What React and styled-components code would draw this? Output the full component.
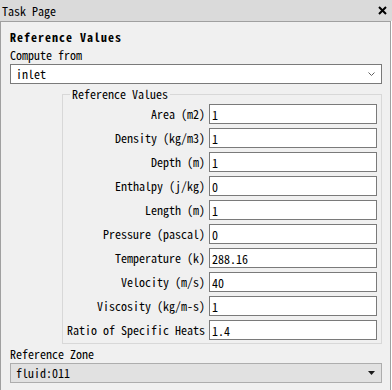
import React from "react";
import styled, { createGlobalStyle } from "styled-components";

const FONT = `"Noto Sans Mono CJK SC", "Liberation Mono", monospace`;

const GlobalStyle = createGlobalStyle`
  html, body {
    margin: 0;
    padding: 0;
    background: #ffffff;
  }
  body {
    font-family: ${FONT};
    font-size: 12px;
    color: #000;
  }
  * { box-sizing: border-box; }
`;

const Window = styled.div`
  width: 392px;
  display: flex;
  flex-direction: column;
`;

const TitleBar = styled.div`
  height: 21px;
  display: flex;
  align-items: center;
  justify-content: space-between;
  padding: 0 5px 0 2px;
  background: #dadada;
`;

const TitleText = styled.span`
  line-height: 14px;
`;

const CloseIcon = styled.svg`
  width: 9px;
  height: 9px;
  display: block;
`;

const Panel = styled.div`
  margin-right: 1px;
  border: 1px solid #a0a0a0;
  border-bottom: none;
  background: #f0f0f0;
  padding: 8px 8px 12px 9px;
  display: flex;
  flex-direction: column;
`;

const Heading = styled.div`
  font-weight: bold;
  letter-spacing: 1px;
  line-height: 14px;
`;

const FieldLabel = styled.div`
  line-height: 14px;
  margin-top: ${(p) => p.$top}px;
  margin-bottom: 2px;
`;

const Combo = styled.div`
  height: 20px;
  border: 1px solid ${(p) => (p.$flat ? "#adadad" : "#7a7a7a")};
  background: ${(p) => (p.$flat ? "#e1e1e1" : "#ffffff")};
  display: flex;
  align-items: center;
  justify-content: space-between;
  padding: 0 6px 0 5px;
  line-height: 14px;
`;

const Arrow = styled.svg`
  width: 7px;
  height: 4px;
  display: block;
`;

const GroupBox = styled.fieldset`
  margin: 3px 0 0 52px;
  padding: 3px 4px 3px 0;
  border: 1px solid #d8d8d8;
  min-inline-size: 0;
`;

const Legend = styled.legend`
  margin-left: 7px;
  padding: 0 2px;
  line-height: 14px;
`;

const Grid = styled.div`
  display: grid;
  grid-template-columns: 1fr 168px;
  column-gap: 4px;
  row-gap: 4px;
  align-items: center;
`;

const RowLabel = styled.label`
  text-align: right;
  line-height: 14px;
  white-space: nowrap;
`;

const ValueInput = styled.input`
  height: 20px;
  width: 168px;
  margin: 0;
  border: 1px solid #7a7a7a;
  border-radius: 0;
  background: #ffffff;
  padding: 0 2px;
  font-family: ${FONT};
  font-size: 12px;
  color: #000;
  outline: none;
`;

const rows = [
  ["Area (m2)", "1"],
  ["Density (kg/m3)", "1"],
  ["Depth (m)", "1"],
  ["Enthalpy (j/kg)", "0"],
  ["Length (m)", "1"],
  ["Pressure (pascal)", "0"],
  ["Temperature (k)", "288.16"],
  ["Velocity (m/s)", "40"],
  ["Viscosity (kg/m-s)", "1"],
  ["Ratio of Specific Heats", "1.4"],
];

export default function App() {
  return (
    <>
      <GlobalStyle />
      <Window>
        <TitleBar>
          <TitleText>Task Page</TitleText>
          <CloseIcon viewBox="0 0 9 9">
            <path d="M1 1 L8 8 M8 1 L1 8" stroke="#000" strokeWidth="2" fill="none" />
          </CloseIcon>
        </TitleBar>
        <Panel>
          <Heading>Reference Values</Heading>
          <FieldLabel $top={4}>Compute from</FieldLabel>
          <Combo>
            <span>inlet</span>
            <Arrow viewBox="0 0 7 4">
              <path d="M0.5 0.5 L3.5 3.5 L6.5 0.5" stroke="#606060" strokeWidth="1" fill="none" />
            </Arrow>
          </Combo>
          <GroupBox>
            <Legend>Reference Values</Legend>
            <Grid>
              {rows.map(([label, value]) => (
                <React.Fragment key={label}>
                  <RowLabel>{label}</RowLabel>
                  <ValueInput readOnly value={value} />
                </React.Fragment>
              ))}
            </Grid>
          </GroupBox>
          <FieldLabel $top={3}>Reference Zone</FieldLabel>
          <Combo $flat>
            <span>fluid:011</span>
            <Arrow viewBox="0 0 7 4">
              <path d="M0 0 L7 0 L3.5 4 Z" fill="#1a1a1a" />
            </Arrow>
          </Combo>
        </Panel>
      </Window>
    </>
  );
}
